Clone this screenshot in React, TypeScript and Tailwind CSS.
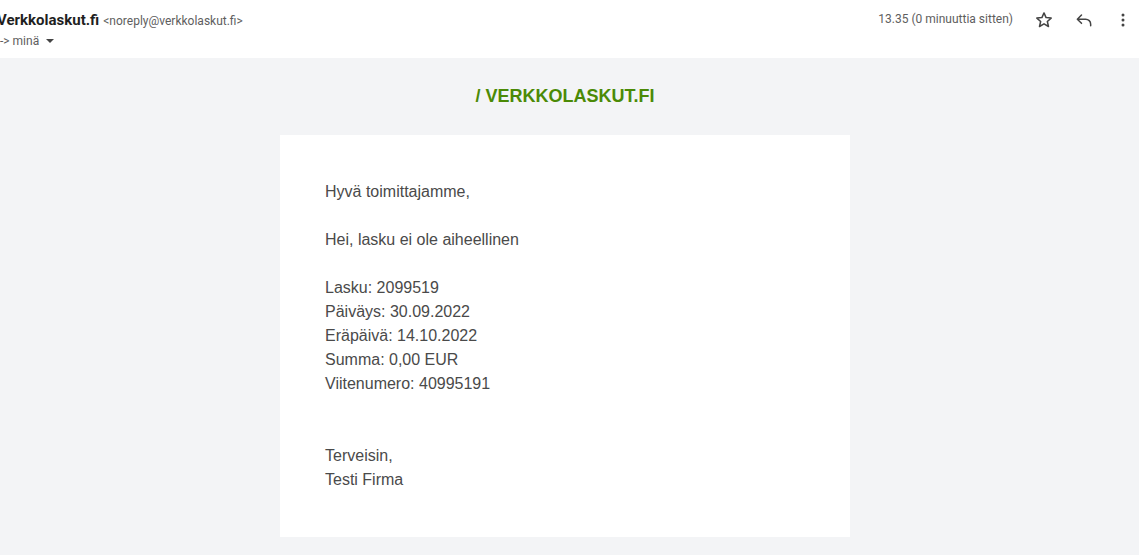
import React from "react";

const lines: string[] = [
  "Hyvä toimittajamme,",
  "",
  "Hei, lasku ei ole aiheellinen",
  "",
  "Lasku: 2099519",
  "Päiväys: 30.09.2022",
  "Eräpäivä: 14.10.2022",
  "Summa: 0,00 EUR",
  "Viitenumero: 40995191",
  "",
  "",
  "Terveisin,",
  "Testi Firma",
];

export default function App() {
  return (
    <div className="w-[1139px] h-[555px] overflow-hidden bg-[#f3f4f6] font-['Roboto',sans-serif]">
      {/* Mail header */}
      <div className="h-[58px] bg-white flex justify-between">
        <div className="-ml-[3px] pt-[10px]">
          <div className="flex items-baseline gap-[4px] leading-[20px]">
            <span className="text-[15px] font-bold text-[#1f1f1f]">Verkkolaskut.fi</span>
            <span className="text-[12px] text-[#5e5e5e]">&lt;noreply@verkkolaskut.fi&gt;</span>
          </div>
          <div className="flex items-center gap-[6px] text-[12px] text-[#5e5e5e] leading-[20px] ml-[3px]">
            <span>-&gt; minä</span>
            <svg width="10" height="10" viewBox="0 0 10 10">
              <path d="M1 3 L9 3 L5 7 Z" fill="#444" />
            </svg>
          </div>
        </div>
        <div className="flex items-start pt-[9px] pr-[6px]">
          <span className="text-[12px] text-[#5e5e5e] leading-[20px] mr-[21px]">13.35 (0 minuuttia sitten)</span>
          <svg width="20" height="20" viewBox="0 0 24 24" className="mr-[20px] mt-[1px]">
            <path
              d="M12 3.5l2.5 5.6 6.1.6-4.6 4.1 1.4 6-5.4-3.2-5.4 3.2 1.4-6-4.6-4.1 6.1-.6z"
              fill="none"
              stroke="#444"
              strokeWidth="1.8"
              strokeLinejoin="round"
            />
          </svg>
          <svg width="20" height="20" viewBox="0 0 24 24" className="mr-[19px] mt-[1px]">
            <path
              d="M9 6L4 11l5 5M4 11h10a6 6 0 0 1 6 6v2"
              fill="none"
              stroke="#444"
              strokeWidth="1.8"
              strokeLinecap="round"
              strokeLinejoin="round"
            />
          </svg>
          <svg width="20" height="20" viewBox="0 0 24 24" className="mt-[1px]">
            <circle cx="12" cy="6" r="1.8" fill="#444" />
            <circle cx="12" cy="12" r="1.8" fill="#444" />
            <circle cx="12" cy="18" r="1.8" fill="#444" />
          </svg>
        </div>
      </div>

      {/* Mail body */}
      <div className="flex flex-col items-center pr-[9px] font-['Liberation_Sans',Arial,sans-serif]">
        <div className="h-[77px] flex items-center justify-center text-[18px] font-bold text-[#4b8a06]">
          / VERKKOLASKUT.FI
        </div>
        <div className="w-[570px] bg-white p-[45px] text-[16px] leading-[24px] text-[#4a4a4a]">
          {lines.map((l, i) => (
            <div key={i} className="h-[24px]">
              {l}
            </div>
          ))}
        </div>
      </div>
    </div>
  );
}
